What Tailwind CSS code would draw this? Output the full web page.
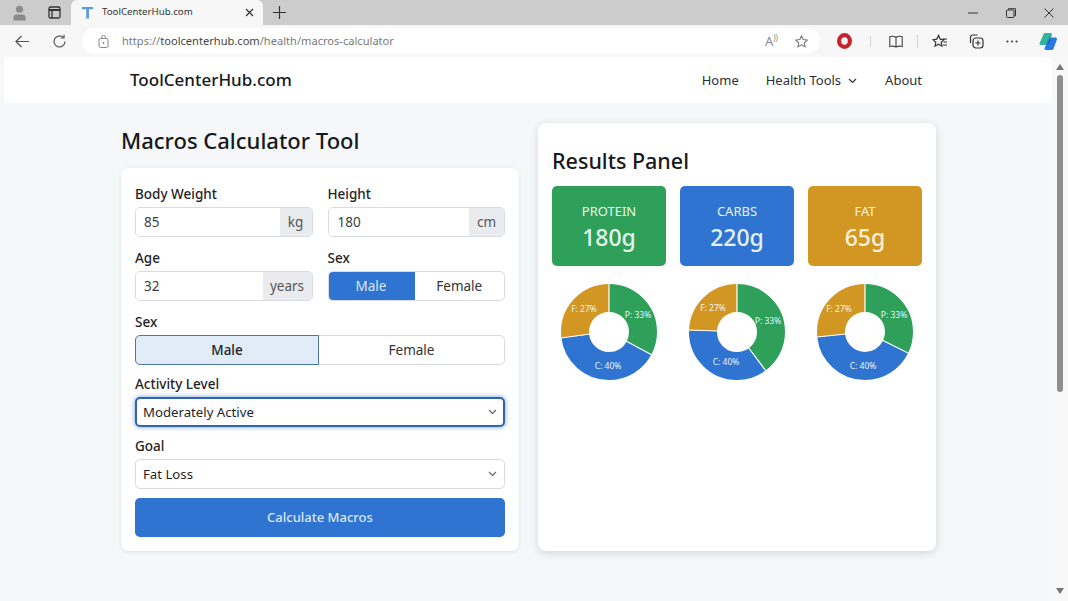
<!DOCTYPE html>
<html lang="en">
<head>
    <meta charset="UTF-8">
    <meta name="viewport" content="width=device-width, initial-scale=1.0">
    <script src="https://cdn.jsdelivr.net/npm/@tailwindcss/browser@4"></script>
    <title>ToolCenterHub.com</title>
</head>
<body class="w-[1068px] h-[601px] overflow-hidden bg-[#f7f7f7] font-['Noto_Sans',sans-serif] text-[#1f2328]">

    <!-- tab strip -->
    <div class="h-[25px] bg-[#cccccc] flex items-stretch">
        <div class="w-[38px] flex items-center justify-center text-[#8a8a8a]">
            <svg width="15" height="18" viewBox="0 0 16 18" fill="currentColor"><circle cx="8" cy="5" r="3.8"/><path d="M1.5 17v-3.2c0-2 1.600-3.300 3.500-3.300h6c1.900 0 3.500 1.300 3.500 3.300V17z"/></svg>
        </div>
        <div class="w-[33px] flex items-center justify-center">
            <svg width="13" height="13" viewBox="0 0 13 13" fill="none" stroke="#333" stroke-width="1.300"><rect x="1" y="1" width="11" height="11" rx="1.500"/><path d="M1 4h11" stroke-width="2"/><path d="M4 4v8"/></svg>
        </div>
        <div class="w-[192px] bg-[#f7f7f7] rounded-t-[6px] flex items-center pl-[10px] pr-[9px]">
            <svg width="13" height="13" viewBox="0 0 14 14" fill="#5b9bdc"><path d="M1 1h12v2.500H8.600V13.500H5.600V3.500H1z"/></svg>
            <span class="ml-[8px] text-[9.700px] text-[#333]">ToolCenterHub.com</span>
            <svg class="ml-auto" width="9" height="9" viewBox="0 0 9 9" stroke="#333" stroke-width="1.200"><path d="M1 1l7 7M8 1l-7 7"/></svg>
        </div>
        <div class="w-[32px] flex items-center justify-center">
            <svg width="13" height="13" viewBox="0 0 13 13" stroke="#333" stroke-width="1.200"><path d="M6.500 0v13M0 6.500h13"/></svg>
        </div>
        <div class="ml-auto flex items-center">
            <div class="w-[38px] flex justify-center"><svg width="10" height="10" viewBox="0 0 10 10" stroke="#333"><path d="M0 5h10"/></svg></div>
            <div class="w-[38px] flex justify-center"><svg width="10" height="10" viewBox="0 0 10 10" fill="none" stroke="#333"><rect x="0.500" y="2" width="7.500" height="7.500" rx="1"/><path d="M2.500 2V.7h7v7H8"/></svg></div>
            <div class="w-[38px] flex justify-center"><svg width="10" height="10" viewBox="0 0 10 10" stroke="#333"><path d="M.5.5l9 9M9.500.5l-9 9"/></svg></div>
        </div>
    </div>

    <!-- toolbar -->
    <div class="h-[32px] bg-[#f7f7f7] flex items-center">
        <div class="w-[44px] flex justify-center">
            <svg width="15" height="13" viewBox="0 0 15 13" fill="none" stroke="#555" stroke-width="1.200"><path d="M14 6.500H1M6.500 1L1 6.500 6.500 12"/></svg>
        </div>
        <div class="w-[30px] flex justify-center">
            <svg width="15" height="15" viewBox="0 0 15 15" fill="none" stroke="#555" stroke-width="1.200"><path d="M13 7.500a5.500 5.500 0 1 1-1.700-4"/><path d="M12 .8v3.200H8.800"/></svg>
        </div>
        <div class="ml-[8px] w-[738px] h-[26px] bg-white rounded-full flex items-center pl-[16px] pr-[11px]">
            <svg width="11" height="13" viewBox="0 0 11 13" fill="none" stroke="#888"><rect x="1" y="3.500" width="9" height="9" rx="1.500"/><path d="M3.500 3.500V2.500a2 2 0 0 1 4 0v1"/><circle cx="5.500" cy="8" r=".6" fill="#888"/></svg>
            <span class="ml-[13px] text-[11.100px] text-[#7a7a7a]">https://<span class="text-[#444]">toolcenterhub.com</span>/health/macros-calculator</span>
            <span class="ml-auto text-[13px] text-[#888] leading-none">A<span class="text-[8px] align-super">))</span></span>
            <svg class="ml-[16px]" width="15" height="15" viewBox="0 0 24 24" fill="none" stroke="#777" stroke-width="1.700"><path d="M12 3l2.800 5.900 6.400.8-4.700 4.400 1.200 6.400L12 17.400l-5.700 3.100 1.200-6.400L2.800 9.700l6.400-.8z"/></svg>
        </div>
        <div class="flex-1 flex items-center pl-[17px]">
            <svg width="15" height="16" viewBox="0 0 15 16"><ellipse cx="7.500" cy="8" rx="5.400" ry="5.800" fill="none" stroke="#c4242d" stroke-width="4.200"/></svg>
            <div class="w-px h-[11px] bg-[#d5d5d5] ml-[18px]"></div>
            <svg class="ml-[18px]" width="14" height="13" viewBox="0 0 14 13" fill="none" stroke="#444" stroke-width="1.100"><path d="M7 2.500C5.500 1 3 1 .8 1.500v10C3 11 5.500 11 7 12c1.500-1 4-1 6.200-.5v-10C11 1 8.500 1 7 2.500zM7 2.500V12"/></svg>
            <div class="w-px h-[13px] bg-[#d5d5d5] ml-[14px]"></div>
            <svg class="ml-[14px]" width="16" height="15" viewBox="0 0 16 15" fill="none" stroke="#333" stroke-width="1.200"><path d="M6.500 1.500l1.700 3.600 3.800.5-2.800 2.700.7 3.900-3.400-1.900-3.400 1.900.7-3.900L1 5.600l3.800-.5zM11 5h4M11.500 8h3.500M11 11h4"/></svg>
            <svg class="ml-[21px]" width="15" height="15" viewBox="0 0 15 15" fill="none" stroke="#333" stroke-width="1.200"><path d="M1.500 9V3a2 2 0 0 1 2-2h5"/><rect x="4" y="4" width="10" height="10" rx="3"/><path d="M9 6.500v5M6.500 9h5"/></svg>
            <svg class="ml-[22px]" width="12" height="3" viewBox="0 0 12 3" fill="#333"><circle cx="1.500" cy="1.500" r="1"/><circle cx="6" cy="1.500" r="1"/><circle cx="10.500" cy="1.500" r="1"/></svg>
            <svg class="ml-[20px]" width="20" height="19" viewBox="0 0 20 19" stroke-width="3" stroke-linejoin="round"><polygon points="7,2.500 12.500,2.500 9.500,11.500 3,11.500" fill="#2fb59a" stroke="#2fb59a"/><polygon points="12,7 17.500,7 14,16.500 8,16.500" fill="#2a78e0" stroke="#2a78e0"/><polygon points="11.500,7.500 13,7.500 10.500,12 9.500,12" fill="#1b5fb8"/></svg>
        </div>
    </div>

    <!-- viewport -->
    <div class="h-[544px] pl-[4px] flex">
        <div class="w-[1048px] bg-[#f5f7f8] rounded-tl-[4px]">
            <nav class="h-[46px] bg-white flex items-center pl-[126px] pr-[130px]">
                <span class="text-[17px] font-medium text-[#16191c]">ToolCenterHub.com</span>
                <div class="ml-auto pt-[2px] flex items-center text-[13px] text-[#2b2f33]">
                    <span>Home</span>
                    <span class="ml-[27px]">Health Tools</span>
                    <svg class="ml-[7px]" width="9" height="6" viewBox="0 0 9 6" fill="none" stroke="#333" stroke-width="1.200"><path d="M1 1l3.500 3.500L8 1"/></svg>
                    <span class="ml-[28px]">About</span>
                </div>
            </nav>

            <main class="pl-[117px] pt-[19px] flex gap-[19px]">
                <!-- form column -->
                <section class="w-[398px]">
                    <h1 class="h-[36px] text-[22px] leading-[36px] font-medium text-[#16191c]">Macros Calculator Tool</h1>
                    <div class="mt-[10px] h-[383px] bg-white rounded-[8px] shadow-[0_1px_4px_rgba(0,0,0,0.10)] px-[14px] pt-[16px] text-[13.500px]">
                        <div class="grid grid-cols-2 gap-x-[15px] gap-y-[11px]">
                            <div>
                                <label class="block h-[20px] leading-[20px] mb-[3px] font-medium">Body Weight</label>
                                <div class="h-[30px] flex border border-[#d8dbdf] rounded-[5px] overflow-hidden text-[#3a3f44]">
                                    <input value="85" class="flex-1 min-w-0 pl-[8px] outline-none bg-white">
                                    <span class="w-[32px] bg-[#e9ebee] flex items-center justify-center text-[#555]">kg</span>
                                </div>
                            </div>
                            <div>
                                <label class="block h-[20px] leading-[20px] mb-[3px] font-medium">Height</label>
                                <div class="h-[30px] flex border border-[#d8dbdf] rounded-[5px] overflow-hidden text-[#3a3f44]">
                                    <input value="180" class="flex-1 min-w-0 pl-[9px] outline-none bg-white">
                                    <span class="w-[35px] bg-[#e9ebee] flex items-center justify-center text-[#555]">cm</span>
                                </div>
                            </div>
                            <div>
                                <label class="block h-[20px] leading-[20px] mb-[3px] font-medium">Age</label>
                                <div class="h-[30px] flex border border-[#d8dbdf] rounded-[5px] overflow-hidden text-[#3a3f44]">
                                    <input value="32" class="flex-1 min-w-0 pl-[8px] outline-none bg-white">
                                    <span class="w-[49px] bg-[#e9ebee] flex items-center justify-center text-[#555]">years</span>
                                </div>
                            </div>
                            <div>
                                <label class="block h-[20px] leading-[20px] mb-[3px] font-medium">Sex</label>
                                <div class="h-[30px] flex border border-[#d8dbdf] rounded-[5px] overflow-hidden">
                                    <button class="w-[87px] -m-px mr-0 bg-[#2f74d0] text-[#dbe8f8]">Male</button>
                                    <button class="flex-1 text-[#333]">Female</button>
                                </div>
                            </div>
                        </div>

                        <label class="block mt-[11px] h-[20px] leading-[20px] mb-[3px] font-medium">Sex</label>
                        <div class="h-[30px] flex border border-[#d8dbdf] rounded-[5px]">
                            <button class="w-[184px] -m-px mr-0 bg-[#e1ecf9] border-[1.500px] border-[#4d76a6] rounded-l-[5px] font-medium">Male</button>
                            <button class="flex-1 text-[#333]">Female</button>
                        </div>

                        <label class="block mt-[9px] h-[20px] leading-[20px] mb-[3px] font-medium">Activity Level</label>
                        <div class="relative h-[30px] text-[13.200px]">
                            <select class="appearance-none w-full h-full pl-[6px] pt-[1px] bg-white border-2 border-[#2f66ad] rounded-[5px] shadow-[0_0_5px_rgba(47,116,208,0.7)] outline-none">
                                <option>Moderately Active</option>
                            </select>
                            <svg class="absolute right-[8px] top-[12px]" width="9" height="6" viewBox="0 0 9 6" fill="none" stroke="#666" stroke-width="1.200"><path d="M1 1l3.500 3.500L8 1"/></svg>
                        </div>

                        <label class="block mt-[9px] h-[20px] leading-[20px] mb-[3px] font-medium">Goal</label>
                        <div class="relative h-[30px] text-[13.200px]">
                            <select class="appearance-none w-full h-full pl-[7px] pt-[1px] bg-white border border-[#d8dbdf] rounded-[5px] outline-none">
                                <option>Fat Loss</option>
                            </select>
                            <svg class="absolute right-[8px] top-[12px]" width="9" height="6" viewBox="0 0 9 6" fill="none" stroke="#666" stroke-width="1.200"><path d="M1 1l3.500 3.500L8 1"/></svg>
                        </div>

                        <button class="mt-[9px] w-full h-[39px] pt-[1px] bg-[#2f74d0] rounded-[5px] text-[13px] text-[#dbe8f8] font-medium">Calculate Macros</button>
                    </div>
                </section>

                <!-- results column -->
                <section class="mt-[1px] w-[398px] h-[428px] bg-white rounded-[8px] shadow-[0_2px_8px_rgba(0,0,0,0.14)] px-[14px] pt-[22px]">
                    <h2 class="h-[32px] text-[21.500px] leading-[32px] font-medium text-[#16191c]">Results Panel</h2>
                    <div class="mt-[9px] grid grid-cols-3 gap-[14px]">
                        <div class="h-[80px] pt-[3px] bg-[#2fa05a] rounded-[5px] flex flex-col items-center justify-center text-[#e6f5ea]">
                            <span class="text-[13px] leading-[18px]">PROTEIN</span>
                            <span class="text-[23px] leading-[34px] font-medium">180g</span>
                        </div>
                        <div class="h-[80px] pt-[3px] bg-[#2f74d0] rounded-[5px] flex flex-col items-center justify-center text-[#e6f0fb]">
                            <span class="text-[13px] leading-[18px]">CARBS</span>
                            <span class="text-[23px] leading-[34px] font-medium">220g</span>
                        </div>
                        <div class="h-[80px] pt-[3px] bg-[#d29722] rounded-[5px] flex flex-col items-center justify-center text-[#fbf1d8]">
                            <span class="text-[13px] leading-[18px]">FAT</span>
                            <span class="text-[23px] leading-[34px] font-medium">65g</span>
                        </div>
                    </div>
                    <div class="mt-[17px] grid grid-cols-3 gap-[14px]">
                        <svg width="114" height="98" viewBox="-57 -49 114 98">
                            <g fill="none" stroke-width="28" transform="rotate(-90)">
                                <circle r="34" pathLength="360" stroke="#2fa05a" stroke-dasharray="118 242"/>
                                <circle r="34" pathLength="360" stroke="#2f74d0" stroke-dasharray="145 215" stroke-dashoffset="-118"/>
                                <circle r="34" pathLength="360" stroke="#d29722" stroke-dasharray="97 263" stroke-dashoffset="-263"/>
                            </g>
                            <g stroke="#fff" stroke-width="1.200">
                                <path d="M0-49V-19M17 9L43 23M-19 2L-48 6"/>
                            </g>
                            <g fill="#eef4f6" font-size="8.500" text-anchor="middle">
                                <text x="29" y="-14">P: 33%</text>
                                <text x="-1" y="37">C: 40%</text>
                                <text x="-25" y="-20">F: 27%</text>
                            </g>
                        </svg>
                        <svg width="114" height="98" viewBox="-57 -49 114 98">
                            <g fill="none" stroke-width="28" transform="rotate(-90)">
                                <circle r="34" pathLength="360" stroke="#2fa05a" stroke-dasharray="144 216"/>
                                <circle r="34" pathLength="360" stroke="#2f74d0" stroke-dasharray="128 232" stroke-dashoffset="-144"/>
                                <circle r="34" pathLength="360" stroke="#d29722" stroke-dasharray="88 272" stroke-dashoffset="-272"/>
                            </g>
                            <g stroke="#fff" stroke-width="1.200">
                                <path d="M0-49V-19M11 15L29 39M-19 -1L-48 -2"/>
                            </g>
                            <g fill="#eef4f6" font-size="8.500" text-anchor="middle">
                                <text x="31" y="-8">P: 33%</text>
                                <text x="-11" y="33">C: 40%</text>
                                <text x="-24" y="-21">F: 27%</text>
                            </g>
                        </svg>
                        <svg width="114" height="98" viewBox="-57 -49 114 98">
                            <g fill="none" stroke-width="28" transform="rotate(-90)">
                                <circle r="34" pathLength="360" stroke="#2fa05a" stroke-dasharray="116 244"/>
                                <circle r="34" pathLength="360" stroke="#2f74d0" stroke-dasharray="148 212" stroke-dashoffset="-116"/>
                                <circle r="34" pathLength="360" stroke="#d29722" stroke-dasharray="96 264" stroke-dashoffset="-264"/>
                            </g>
                            <g stroke="#fff" stroke-width="1.200">
                                <path d="M0-49V-19M17 8L43 21M-19 2L-48 5"/>
                            </g>
                            <g fill="#eef4f6" font-size="8.500" text-anchor="middle">
                                <text x="29" y="-14">P: 33%</text>
                                <text x="-2" y="37">C: 40%</text>
                                <text x="-26" y="-20">F: 27%</text>
                            </g>
                        </svg>
                    </div>
                </section>
            </main>
        </div>

        <!-- scrollbar -->
        <div class="flex-1 bg-[#f8f8f8] relative flex flex-col items-center pt-[7px]">
            <svg width="8" height="6" viewBox="0 0 8 6" fill="#777"><path d="M4 0l4 6H0z"/></svg>
            <div class="mt-[5px] w-[6px] h-[317px] bg-[#8e8e8e] rounded-full"></div>
            <svg class="absolute bottom-[7px]" width="8" height="6" viewBox="0 0 8 6" fill="#777"><path d="M4 6L0 0h8z"/></svg>
        </div>
    </div>
</body>
</html>
